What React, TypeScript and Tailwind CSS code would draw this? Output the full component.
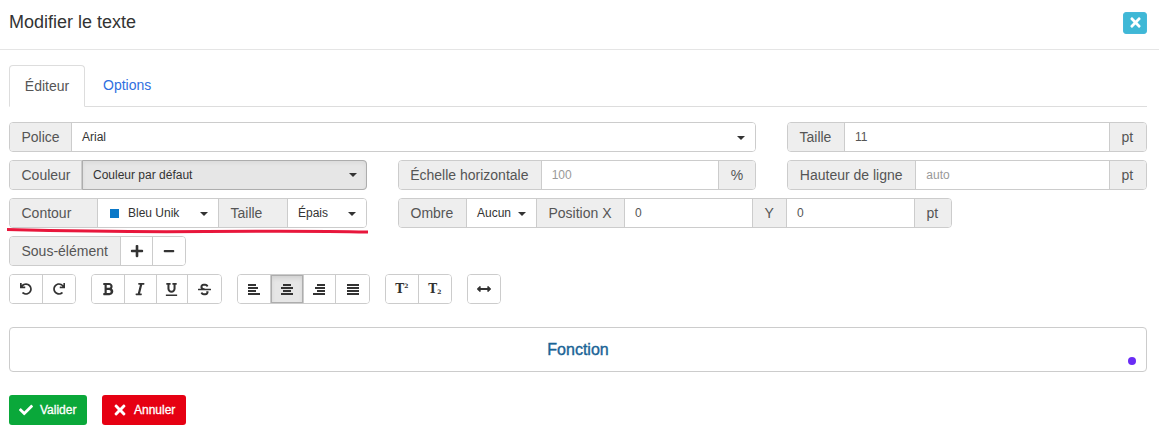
import type { ReactNode } from 'react';
import {
  FaArrowsAltH,
  FaBold,
  FaCheck,
  FaItalic,
  FaMinus,
  FaPlus,
  FaRedo,
  FaStrikethrough,
  FaTimes,
  FaUnderline,
  FaUndo,
} from 'react-icons/fa';

const Addon = ({ w, children }: { w: string; children: ReactNode }) => (
  <div className={`${w} h-full flex items-center pl-[11.5px] shrink-0 bg-[#eeeeee] border-r border-[#cccccc] last:border-r-0 text-[14px] text-[#555555]`}>
    {children}
  </div>
);

const Field = ({ value, muted, className = '' }: { value: string; muted?: boolean; className?: string }) => (
  <div className={`${className} h-full flex items-center pl-[10px] bg-white border-r border-[#cccccc] last:border-r-0 text-[12px] ${muted ? 'text-[#999999]' : 'text-[#555555]'}`}>
    {value}
  </div>
);

const Caret = () => (
  <span className="absolute right-[10px] top-[13px] w-0 h-0 border-x-4 border-x-transparent border-t-4 border-t-[#333333]" />
);

const Select = ({ className, children }: { className: string; children: ReactNode }) => (
  <div className={`${className} relative h-full flex items-center bg-white border-r border-[#cccccc] last:border-r-0 text-[12px] text-[#333333]`}>
    {children}
    <Caret />
  </div>
);

const Group = ({ className = '', children }: { className?: string; children: ReactNode }) => (
  <div className={`${className} h-[30px] flex border border-[#cccccc] rounded-[4px] overflow-hidden`}>{children}</div>
);

const Tool = ({ w = 'w-[33px]', active, children }: { w?: string; active?: boolean; children: ReactNode }) => (
  <div className={`${w} h-full flex items-center justify-center border-r border-[#cccccc] last:border-r-0 text-[#333333] text-[12px] ${active ? 'bg-[#e6e6e6] shadow-[inset_1px_0_0_#adadad,inset_-1px_0_0_#adadad,inset_0_1px_0_#adadad,inset_0_-1px_0_#adadad,inset_0_3px_5px_rgba(0,0,0,0.1)]' : 'bg-white'}`}>
    {children}
  </div>
);

// four bars, same metrics as the font-awesome 4 align icons
const AlignIcon = ({ bars }: { bars: [number, number][] }) => (
  <svg width="12" height="11" viewBox="0 0 12 11" fill="#333333">
    {bars.map(([x, width], i) => (
      <rect key={i} x={x} y={i * 3} width={width} height="2" />
    ))}
  </svg>
);

export default function App() {
  return (
    <div className="w-[1159px] h-[435px] overflow-hidden bg-white font-['Liberation_Sans',Arial,sans-serif]">
      {/* Header */}
      <div className="h-[50px] pl-[9px] pr-[12px] flex items-center justify-between border-b border-[#e5e5e5]">
        <h4 className="text-[18px] text-[#333333] -mt-[5px]">Modifier le texte</h4>
        <button className="w-[24px] h-[22px] -mt-[4px] flex items-center justify-center rounded-[3px] bg-[#3fb8d6] border border-[#46b8da] text-white">
          <FaTimes className="w-[15px] h-[15px]" />
        </button>
      </div>

      <div className="pl-[9px] pr-[12px] pt-[15px]">
        {/* Tabs */}
        <div className="h-[42px] flex border-b border-[#dddddd] text-[14px]">
          <div className="w-[76px] h-[42px] flex items-center justify-center bg-white border border-[#dddddd] border-b-white rounded-t-[4px] text-[#555555]">
            Éditeur
          </div>
          <div className="ml-[18px] h-[41px] flex items-center text-[#2f6fe0]">Options</div>
        </div>

        {/* Form rows */}
        <div className="relative mt-[15px] flex flex-col gap-[8px]">
          <div className="flex gap-[31px]">
            <Group className="w-[747px]">
              <Addon w="w-[62px]">Police</Addon>
              <Select className="flex-1 pl-[10px]">Arial</Select>
            </Group>
            <Group className="w-[360px]">
              <Addon w="w-[57px]">Taille</Addon>
              <Field className="flex-1" value="11" />
              <Addon w="w-[36px]">pt</Addon>
            </Group>
          </div>

          <div className="flex gap-[31px]">
            <Group className="w-[358px] overflow-visible">
              <Addon w="w-[72px] rounded-l-[3px]">Couleur</Addon>
              <div className="relative flex-1 h-[30px] -my-[1px] -mr-[1px] flex items-center pl-[10px] bg-[#e6e6e6] border border-[#adadad] rounded-r-[4px] text-[12px] text-[#333333] shadow-[inset_0_2px_4px_rgba(0,0,0,0.05)]">
                Couleur par défaut
                <span className="absolute right-[9px] top-[12px] w-0 h-0 border-x-4 border-x-transparent border-t-4 border-t-[#333333]" />
              </div>
            </Group>
            <Group className="w-[359px]">
              <Addon w="w-[143px]">Échelle horizontale</Addon>
              <Field className="flex-1" value="100" muted />
              <Addon w="w-[36px]">%</Addon>
            </Group>
            <Group className="w-[360px]">
              <Addon w="w-[128px]">Hauteur de ligne</Addon>
              <Field className="flex-1" value="auto" muted />
              <Addon w="w-[36px]">pt</Addon>
            </Group>
          </div>

          <div className="flex gap-[31px]">
            <Group className="w-[358px]">
              <Addon w="w-[88px]">Contour</Addon>
              <Select className="w-[121px]">
                <span className="ml-[12px] mr-[9px] w-[9px] h-[9px] bg-[#0a78c8]" />
                Bleu Unik
              </Select>
              <Addon w="w-[69px]">Taille</Addon>
              <Select className="flex-1 pl-[10px]">Épais</Select>
            </Group>
            <Group className="w-[554px]">
              <Addon w="w-[68px]">Ombre</Addon>
              <Select className="w-[70px] pl-[10px]">Aucun</Select>
              <Addon w="w-[88px]">Position X</Addon>
              <Field className="w-[128px]" value="0" />
              <Addon w="w-[34px]">Y</Addon>
              <Field className="w-[128px]" value="0" />
              <Addon w="w-[36px]">pt</Addon>
            </Group>
          </div>

          {/* Hand-drawn red underline */}
          <svg className="absolute left-[-3px] top-[105px]" width="364" height="8" viewBox="0 0 364 8">
            <path d="M1 2.5 C80 4.5 140 5 200 4.5 S320 4 362 5" fill="none" stroke="#e8173c" strokeWidth="3" />
          </svg>

          <Group className="w-[177px]">
            <Addon w="w-[111px]">Sous-élément</Addon>
            <Tool><FaPlus className="w-[14px] h-[14px]" /></Tool>
            <Tool><FaMinus className="w-[12px] h-[12px]" /></Tool>
          </Group>

          {/* Toolbar */}
          <div className="flex gap-[15px]">
            <Group className="w-[67px]">
              <Tool><FaUndo className="w-[12px] h-[12px]" /></Tool>
              <Tool><FaRedo className="w-[12px] h-[12px]" /></Tool>
            </Group>
            <Group className="w-[131px]">
              <Tool><FaBold className="w-[14px] h-[14px]" /></Tool>
              <Tool><FaItalic className="w-[14px] h-[14px]" /></Tool>
              <Tool w="w-[31px]"><FaUnderline className="w-[13px] h-[13px]" /></Tool>
              <Tool w="w-[34px]"><FaStrikethrough className="w-[13px] h-[13px]" /></Tool>
            </Group>
            <Group className="w-[133px]">
              <Tool><AlignIcon bars={[[0, 8], [0, 10], [0, 8], [0, 12]]} /></Tool>
              <Tool active><AlignIcon bars={[[2, 8], [0, 12], [2, 8], [0, 12]]} /></Tool>
              <Tool><AlignIcon bars={[[4, 8], [2, 10], [4, 8], [0, 12]]} /></Tool>
              <Tool><AlignIcon bars={[[0, 12], [0, 12], [0, 12], [0, 12]]} /></Tool>
            </Group>
            <Group className="w-[67px]">
              <Tool>
                <span className="font-['DejaVu_Serif',serif] font-bold text-[12px]">T<sup className="text-[6px] -top-[5px]">2</sup></span>
              </Tool>
              <Tool>
                <span className="font-['DejaVu_Serif',serif] font-bold text-[12px]">T<sub className="text-[6px] -bottom-[1px]">2</sub></span>
              </Tool>
            </Group>
            <Group className="w-[34px]">
              <Tool w="w-full"><FaArrowsAltH className="w-[14px] h-[14px]" /></Tool>
            </Group>
          </div>
        </div>

        {/* Preview */}
        <div className="relative mt-[23px] h-[45px] flex items-center justify-center border border-[#cccccc] rounded-[4px] text-[16px] text-[#1a6496] [-webkit-text-stroke:0.4px_#1a6496]">
          Fonction
          <span className="absolute right-[10px] bottom-[6px] w-[8px] h-[8px] rounded-full bg-[#6a2cf5]" />
        </div>

        {/* Actions */}
        <div className="mt-[23px] flex gap-[15px] text-[12px] text-white [-webkit-text-stroke:0.3px_white]">
          <button className="w-[78px] h-[30px] pl-[10px] flex items-center gap-[7px] rounded-[3px] bg-[#0aa83a]">
            <FaCheck className="w-[14px] h-[14px]" />
            Valider
          </button>
          <button className="w-[84px] h-[30px] pl-[12px] flex items-center gap-[9px] rounded-[3px] bg-[#e60012]">
            <FaTimes className="w-[16px] h-[16px] -mx-[2.5px]" />
            Annuler
          </button>
        </div>
      </div>
    </div>
  );
}
